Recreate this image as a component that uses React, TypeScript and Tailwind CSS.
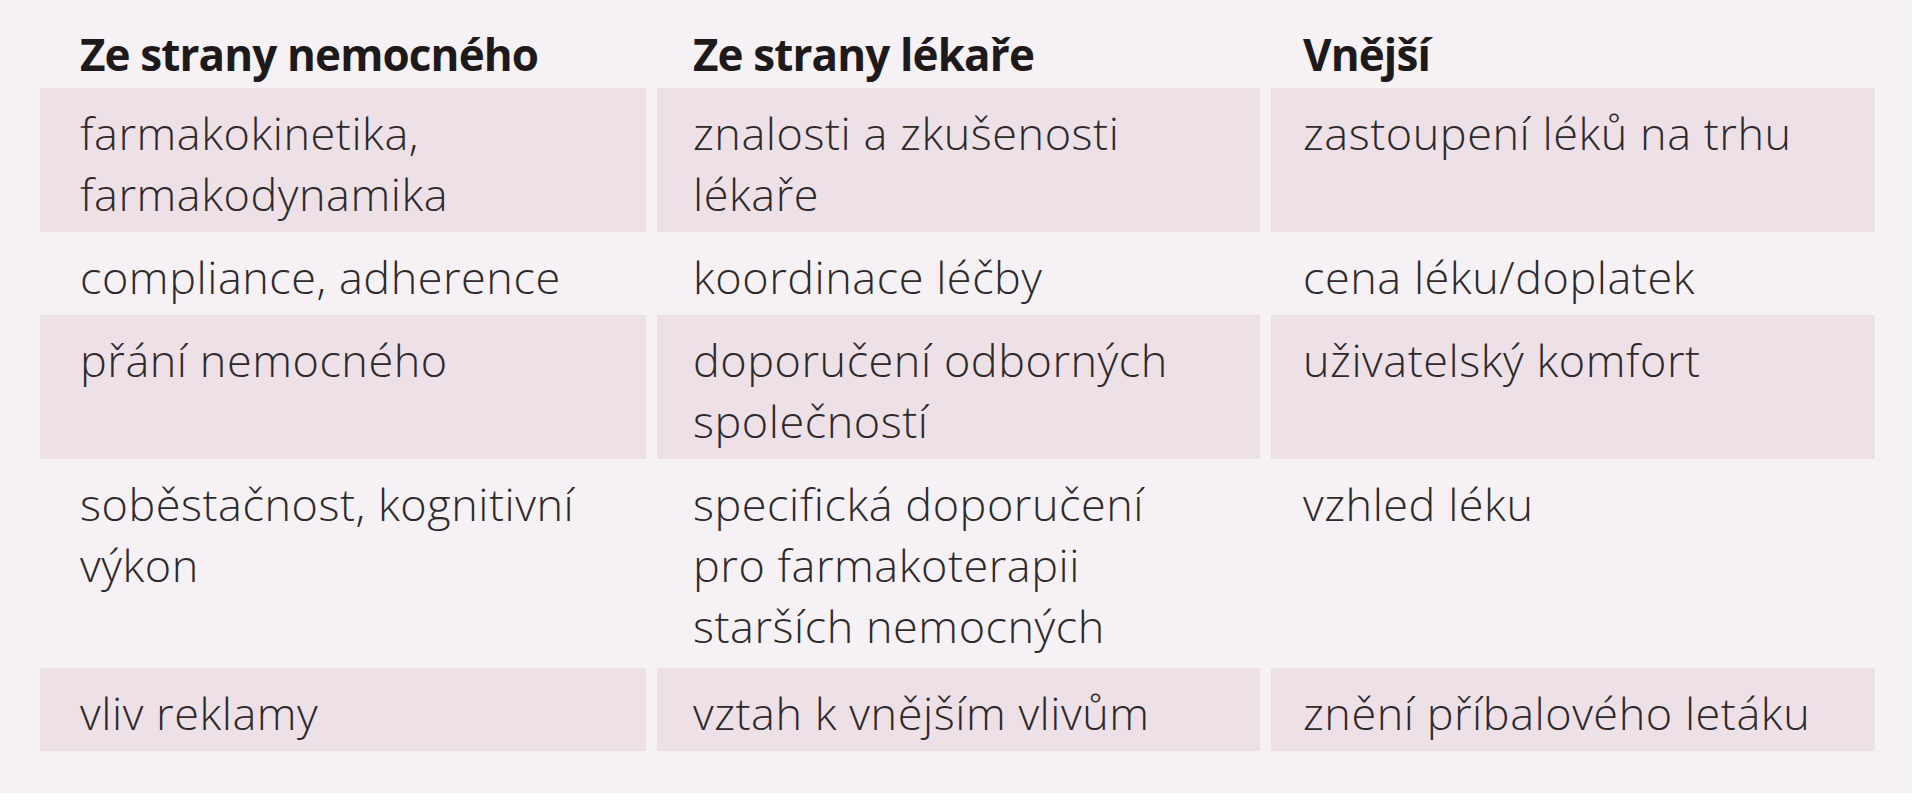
// Faktory ovlivňující farmakoterapii – tabulka
const columns = ['Ze strany nemocného', 'Ze strany lékaře', 'Vnější']

const rows: { shaded: boolean; cells: string[][] }[] = [
  {
    shaded: true,
    cells: [['farmakokinetika,', 'farmakodynamika'], ['znalosti a zkušenosti', 'lékaře'], ['zastoupení léků na trhu']],
  },
  {
    shaded: false,
    cells: [['compliance, adherence'], ['koordinace léčby'], ['cena léku/doplatek']],
  },
  {
    shaded: true,
    cells: [['přání nemocného'], ['doporučení odborných', 'společností'], ['uživatelský komfort']],
  },
  {
    shaded: false,
    cells: [
      ['soběstačnost, kognitivní', 'výkon'],
      ['specifická doporučení', 'pro farmakoterapii', 'starších nemocných'],
      ['vzhled léku'],
    ],
  },
  {
    shaded: true,
    cells: [['vliv reklamy'], ['vztah k vnějším vlivům'], ['znění příbalového letáku']],
  },
]

// odsazení textu v jednotlivých sloupcích
const padX = ['pl-[40px]', 'pl-[36px]', 'pl-[32px]']

export default function App() {
  return (
    <div className="min-h-[800px] w-full bg-white">
      <div
        className="h-[793px] w-[1912px] bg-[#f6f1f4] pl-[40px] pt-[24px]"
        style={{ fontFamily: '"Open Sans", "Noto Sans", sans-serif' }}
      >
        <div className="grid grid-cols-[606px_603px_604px] gap-x-[11px] mb-[3px]">
          {columns.map((col, i) => (
            <div
              key={col}
              className={`${padX[i]} whitespace-nowrap text-[44px] leading-[61px] font-bold tracking-[-0.02em] text-[#1e1a1b]`}
            >
              {col}
            </div>
          ))}
        </div>

        {rows.map((row, r) => (
          <div key={r} className="grid grid-cols-[606px_603px_604px] gap-x-[11px]">
            {row.cells.map((lines, c) => (
              <div
                key={c}
                className={`${padX[c]} pt-[14px] ${r === 3 ? 'pb-[12px]' : 'pb-[8px]'} ${row.shaded ? 'bg-[#ede0e6]' : ''} whitespace-nowrap text-[45px] leading-[61px] tracking-[0.012em] font-light text-[#2e292b]`}
              >
                {lines.map((line, l) => (
                  <div key={l}>{line}</div>
                ))}
              </div>
            ))}
          </div>
        ))}
      </div>
    </div>
  )
}
